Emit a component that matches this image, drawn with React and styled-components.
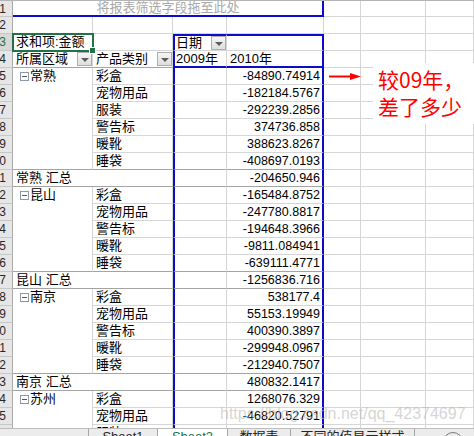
import React from "react";
import styled, { createGlobalStyle } from "styled-components";

const GRID = "#d6d6d6";
const DARK = "#a4a4a4";
const BLUE = "#0c0ccc";
const GREEN = "#217346";

const GlobalStyle = createGlobalStyle`
  html, body {
    margin: 0;
    padding: 0;
    background: #fff;
    overflow: hidden;
  }
  body {
    font-family: "Liberation Sans", "Noto Sans CJK SC", sans-serif;
  }
`;

const line = (kind) => {
  if (kind === "blue") return `2px solid ${BLUE}`;
  if (kind === "dark") return `1px solid ${DARK}`;
  if (kind === "none") return "none";
  return `1px solid ${GRID}`;
};

const groups = [
  {
    name: "常熟",
    items: [
      ["彩盒", "-84890.74914"],
      ["宠物用品", "-182184.5767"],
      ["服装", "-292239.2856"],
      ["警告标", "374736.858"],
      ["暖靴", "388623.8267"],
      ["睡袋", "-408697.0193"],
    ],
    total: "-204650.946",
  },
  {
    name: "昆山",
    items: [
      ["彩盒", "-165484.8752"],
      ["宠物用品", "-247780.8817"],
      ["警告标", "-194648.3966"],
      ["暖靴", "-9811.084941"],
      ["睡袋", "-639111.4771"],
    ],
    total: "-1256836.716",
  },
  {
    name: "南京",
    items: [
      ["彩盒", "538177.4"],
      ["宠物用品", "55153.19949"],
      ["警告标", "400390.3897"],
      ["暖靴", "-299948.0967"],
      ["睡袋", "-212940.7507"],
    ],
    total: "480832.1417",
  },
  {
    name: "苏州",
    items: [
      ["彩盒", "1268076.329"],
      ["宠物用品", "-46820.52791"],
      ["服装", ""],
    ],
    total: null,
  },
];

const tabs = [
  { name: "Sheet1", width: 69 },
  { name: "Sheet2", width: 70, active: true },
  { name: "数据表", width: 63 },
  { name: "不同的值显示样式", width: 125 },
];

const Page = styled.div`
  width: 474px;
  height: 436px;
  overflow: hidden;
`;

const Sheet = styled.div`
  position: relative;
  box-sizing: border-box;
  display: grid;
  grid-template-columns: 13px 80px 80px 54px 97px 37px 65px 48px;
  grid-template-rows: 16px;
  grid-auto-rows: 17px;
  height: 428px;
  overflow: hidden;
  border-top: 1px solid #b4b4b4;
`;

const RowHead = styled.div`
  box-sizing: border-box;
  display: flex;
  justify-content: flex-end;
  align-items: center;
  padding-right: 6px;
  overflow: hidden;
  background: ${(p) => (p.$active ? "#d8d8d8" : "#e6e6e6")};
  border-right: 1px solid #a9a9a9;
  border-bottom: 1px solid #c8c8c8;
  color: ${(p) => (p.$active ? GREEN : "#262626")};
  font-size: 12px;
  white-space: nowrap;
`;

const Cell = styled.div`
  position: relative;
  box-sizing: border-box;
  min-width: 0;
  grid-column: span ${(p) => p.$cols || 1};
  grid-row: span ${(p) => p.$rows || 1};
  display: flex;
  align-items: ${(p) => (p.$top ? "flex-start" : "center")};
  justify-content: ${(p) =>
    p.$num ? "flex-end" : p.$center ? "center" : "flex-start"};
  padding: 0 ${(p) => (p.$drop ? 0 : p.$num ? 2 : 2)}px 0
    ${(p) => (p.$l ? 1 : 3)}px;
  border-right: ${(p) => line(p.$r)};
  border-bottom: ${(p) => line(p.$b)};
  border-left: ${(p) => (p.$l ? line(p.$l) : "none")};
  border-top: ${(p) => (p.$t ? line(p.$t) : "none")};
  color: ${(p) => (p.$hint ? "#a8a8a8" : "#000")};
  font-size: ${(p) => (p.$num ? "12.5px" : "13px")};
  line-height: 16px;
  white-space: nowrap;
`;

const SelectedCell = styled(Cell)`
  z-index: 1;
  outline: 2px solid ${GREEN};
  outline-offset: -1px;
`;

const Handle = styled.span`
  position: absolute;
  right: -4px;
  bottom: -4px;
  width: 5px;
  height: 5px;
  background: ${GREEN};
  border: 1px solid #fff;
`;

const Drop = styled.span`
  position: relative;
  box-sizing: border-box;
  flex: none;
  width: 15px;
  height: 14px;
  margin-left: auto;
  border: 1px solid #adadad;
  background: linear-gradient(#f6f6f6, #dedede);

  &::after {
    content: "";
    position: absolute;
    left: 3px;
    top: 5px;
    border-left: 4px solid transparent;
    border-right: 4px solid transparent;
    border-top: 4px solid #5e5e5e;
  }
`;

const GroupLabel = styled.span`
  display: flex;
  align-items: center;
  height: 16px;
`;

const Toggle = styled.span`
  position: relative;
  box-sizing: border-box;
  width: 9px;
  height: 9px;
  margin: 0 1px 0 4px;
  border: 1px solid #8d98a8;
  background: #fff;

  &::after {
    content: "";
    position: absolute;
    left: 1px;
    right: 1px;
    top: 3px;
    height: 1px;
    background: #4a5970;
  }
`;

const Note = styled.div`
  position: absolute;
  left: 373px;
  top: 62px;
  width: 101px;
  padding: 3px 0 4px 5px;
  box-sizing: border-box;
  background: #fff;
  color: #ff0000;
  font-family: "Noto Sans CJK SC", sans-serif;
  font-size: 21px;
  line-height: 27px;
  white-space: nowrap;
  z-index: 2;
`;

const Arrow = styled.svg`
  position: absolute;
  left: 328px;
  top: 72px;
  z-index: 2;
`;

const Watermark = styled.div`
  position: absolute;
  left: 220px;
  top: 404px;
  z-index: 3;
  color: rgba(185, 185, 185, 0.6);
  font-size: 16px;
  line-height: 18px;
  white-space: nowrap;
`;

const TabBar = styled.div`
  display: flex;
  height: 8px;
  overflow: hidden;
  background: #ececec;
  border-top: 1px solid #bdbdbd;
  box-sizing: border-box;
`;

const TabSpacer = styled.div`
  width: 88px;
  flex: none;
`;

const Tab = styled.div`
  flex: none;
  box-sizing: border-box;
  width: ${(p) => p.$w}px;
  margin-top: ${(p) => (p.$active ? "-1px" : "0")};
  border-left: 1px solid #a6a6a6;
  border-right: ${(p) => (p.$last ? "1px solid #a6a6a6" : "none")};
  background: ${(p) => (p.$active ? "#fff" : "transparent")};
  color: ${(p) => (p.$active ? GREEN : "#262626")};
  font-size: 13px;
  line-height: 16px;
  padding-top: ${(p) => (p.$active ? "1px" : "0")};
  text-align: center;
  white-space: nowrap;
`;

const AddSheet = styled.div`
  flex: none;
  box-sizing: border-box;
  width: 20px;
  height: 20px;
  margin: 3px 0 0 28px;
  border: 1px solid #7a7a7a;
  border-radius: 50%;
`;

const Outside = () => (
  <>
    <Cell />
    <Cell />
    <Cell />
  </>
);

const buildRows = () => {
  const rows = [];
  let n = 5;
  groups.forEach((g) => {
    g.items.forEach(([label, value], i) => {
      const closing = i === g.items.length - 1 && g.total;
      const b = closing ? "dark" : "grid";
      rows.push(
        <React.Fragment key={`r${n}`}>
          <RowHead>{n}</RowHead>
          {i === 0 && (
            <Cell $rows={g.items.length} $top $b={g.total ? "dark" : "grid"}>
              <GroupLabel>
                <Toggle />
                {g.name}
              </GroupLabel>
            </Cell>
          )}
          <Cell $b={b}>{label}</Cell>
          <Cell $l="blue" $b={b} />
          <Cell $num $r="blue" $b={b}>
            {value}
          </Cell>
          <Outside />
        </React.Fragment>
      );
      n += 1;
    });
    if (g.total) {
      rows.push(
        <React.Fragment key={`r${n}`}>
          <RowHead>{n}</RowHead>
          <Cell $cols={2} $b="dark">
            {g.name} 汇总
          </Cell>
          <Cell $l="blue" $b="dark" />
          <Cell $num $r="blue" $b="dark">
            {g.total}
          </Cell>
          <Outside />
        </React.Fragment>
      );
      n += 1;
    }
  });
  return rows;
};

const App = () => {
  return (
    <Page>
      <GlobalStyle />
      <Sheet>
        <RowHead>1</RowHead>
        <Cell $cols={4} $center $hint $b="blue" $r="blue">
          将报表筛选字段拖至此处
        </Cell>
        <Outside />

        <RowHead>2</RowHead>
        <Cell />
        <Cell />
        <Cell />
        <Cell />
        <Outside />

        <RowHead $active>3</RowHead>
        <SelectedCell>
          求和项:金额
          <Handle />
        </SelectedCell>
        <Cell />
        <Cell $t="blue" $l="blue" $drop>
          日期
          <Drop />
        </Cell>
        <Cell $t="blue" $r="blue" />
        <Outside />

        <RowHead>4</RowHead>
        <Cell $b="dark" $drop>
          所属区域
          <Drop />
        </Cell>
        <Cell $b="dark" $drop>
          产品类别
          <Drop />
        </Cell>
        <Cell $l="blue" $b="blue">
          2009年
        </Cell>
        <Cell $r="blue" $b="blue">
          2010年
        </Cell>
        <Outside />

        {buildRows()}

        <Arrow width="34" height="7" viewBox="0 0 34 7">
          <line x1="1" y1="3.5" x2="24" y2="3.5" stroke="#ff0000" strokeWidth="2" />
          <polygon points="22,0 33,3.5 22,7" fill="#ff0000" />
        </Arrow>
        <Note>
          较09年，
          <br />
          差了多少
        </Note>
        <Watermark>https://blog.csdn.net/qq_42374697</Watermark>
      </Sheet>
      <TabBar>
        <TabSpacer />
        {tabs.map((t, i) => (
          <Tab
            key={t.name}
            $w={t.width}
            $active={t.active}
            $last={i === tabs.length - 1}
          >
            {t.name}
          </Tab>
        ))}
        <AddSheet />
      </TabBar>
    </Page>
  );
};

export default App;
